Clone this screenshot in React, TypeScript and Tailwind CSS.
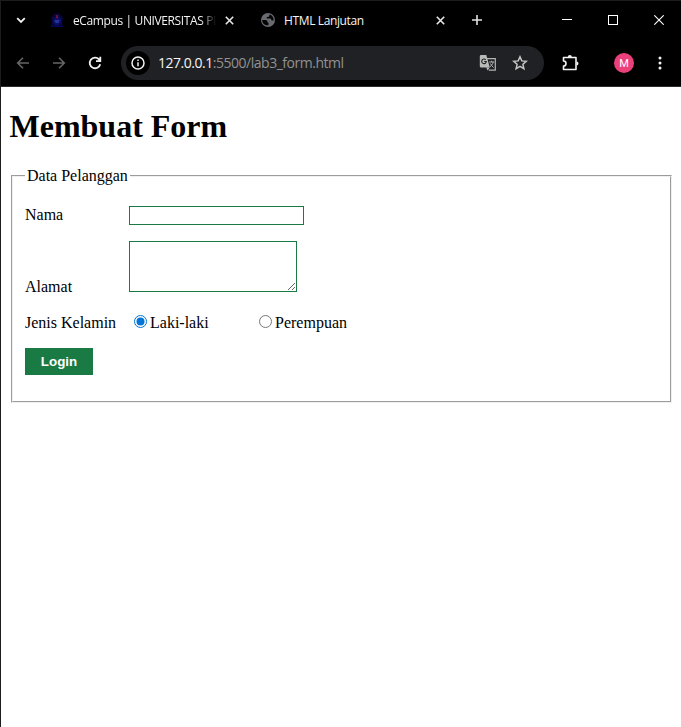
import React from "react";

const ui = "font-['Open_Sans','Noto_Sans',sans-serif]";

function TabClose() {
  return (
    <svg width="9" height="9" viewBox="0 0 9 9" className="shrink-0" stroke="#e8e8e8" strokeWidth="1.6">
      <path d="M.8.8l7.4 7.4M8.2.8L.8 8.2" />
    </svg>
  );
}

function CampusLogo() {
  return (
    <svg width="14" height="16" viewBox="0 0 14 16" className="shrink-0">
      <path d="M4.5 1.5h5l3.5 4-.7 5v3H1.7v-3L1 5.5z" fill="#06063a" />
      <circle cx="7" cy="9" r="4.3" fill="#0d0d66" />
      <path d="M4.5 8h5l-1 3h-3z" fill="#26329a" />
      <path d="M1 13.5h12v1.3H1z" fill="#0a0a70" />
      <path d="M6.4 3h1.3v3.3H6.4z" fill="#b3141c" />
    </svg>
  );
}

function Globe() {
  return (
    <svg width="14" height="14" viewBox="0 0 14 14" className="shrink-0">
      <circle cx="7" cy="7" r="7" fill="#686b6f" />
      <path d="M1.2 7h3.2c1.4 0 2.1.7 2.1 2v.6h1v2.6c-3 .5-6.3-1.5-6.3-5.2z" fill="#050505" />
      <path d="M8.4 1.4v1.2c0 .8-.6 1.4-1.4 1.4H5.8v1.5h3.1c.9 0 1.5.6 1.5 1.5v.6h2.2c.4-2.8-1.4-5.5-4.2-6.2z" fill="#050505" />
    </svg>
  );
}

function TabBar() {
  return (
    <div className="flex h-[38px] items-center">
      <div className="flex w-[49px] justify-center pr-[9px]">
        <svg width="10" height="7" viewBox="0 0 10 7" fill="none" stroke="#f2f2f2" strokeWidth="1.8">
          <path d="M1.2 1.2L5 5l3.8-3.8" />
        </svg>
      </div>
      <div className="flex w-[211px] items-center">
        <CampusLogo />
        <span className="ml-[9px] mt-[2px] w-[152px] whitespace-nowrap text-[12px] leading-4 tracking-[-0.38px] text-[#f2f2f2] [mask-image:linear-gradient(to_right,black_128px,transparent_143px)]">
          eCampus | UNIVERSITAS PE
        </span>
        <TabClose />
      </div>
      <div className="flex w-[186px] items-center">
        <Globe />
        <span className="ml-[9px] mt-[2px] w-[152px] whitespace-nowrap text-[12px] leading-4 tracking-[-0.37px] text-[#f5f5f5]">HTML Lanjutan</span>
        <TabClose />
      </div>
      <svg width="10" height="10" viewBox="0 0 10 10" className="ml-[25px]" stroke="#e2e2e2" strokeWidth="1.6">
        <path d="M5 0v10M0 5h10" />
      </svg>
      <div className="ml-[80px] flex items-center gap-[36px]">
        <svg width="10" height="10" shapeRendering="crispEdges"><path d="M0 4.5h10" stroke="#fff" /></svg>
        <svg width="10" height="10" shapeRendering="crispEdges"><path d="M.5.5h9v9h-9z" stroke="#fff" fill="none" /></svg>
        <svg width="10" height="10"><path d="M.3.3l9.4 9.4M9.7.3L.3 9.7" stroke="#fff" strokeWidth="1.1" /></svg>
      </div>
    </div>
  );
}

function Toolbar() {
  return (
    <div className="flex h-[48px] items-center pb-px pl-[14px]">
      <svg width="16" height="16" viewBox="0 0 16 16" fill="none" stroke="#666666" strokeWidth="1.6">
        <path d="M14 8H3M8 2.7L2.7 8 8 13.3" />
      </svg>
      <svg width="16" height="16" viewBox="0 0 16 16" fill="none" stroke="#666666" strokeWidth="1.6" className="ml-[20px]">
        <path d="M2 8h11M8 2.7L13.3 8 8 13.3" />
      </svg>
      <svg width="16" height="16" viewBox="0 0 16 16" fill="none" stroke="#f2f2f2" strokeWidth="1.8" className="ml-[20px]">
        <path d="M13.2 9.2A5.3 5.3 0 1 1 12 4.4l1.2 1.3M13.3 1.8v4.4H9" />
      </svg>
      <div className="ml-[18px] flex h-[34px] w-[423px] items-center rounded-full bg-[#202124] pl-[5px]">
        <span className="flex size-[24px] items-center justify-center rounded-full bg-black">
          <svg width="14" height="14" viewBox="0 0 14 14" fill="none" stroke="#f2f2f2">
            <circle cx="7" cy="7" r="6" strokeWidth="1.5" />
            <path d="M7 6.2v4M7 3.6v1.5" strokeWidth="1.5" />
          </svg>
        </span>
        <span className="ml-[8px] w-[321px] whitespace-nowrap text-[14px] leading-5 tracking-[-0.48px] text-[#929292]">
          <span className="text-[#f5f5f5]">127.0.0.1</span>:5500/lab3_form.html
        </span>
        <svg width="18" height="18" viewBox="0 0 18 18">
          <path d="M8 4.6h8.3v11.6H9.8" fill="none" stroke="#b4b4b4" strokeWidth="1.2" />
          <path d="M2 1h5.3l3.5 12.5H2a1.2 1.2 0 0 1-1.2-1.2V2.2A1.2 1.2 0 0 1 2 1z" fill="#b9b9b9" />
          <path d="M7.2 13.5h3.6l-2.2 2.9z" fill="#b9b9b9" />
          <path d="M6.7 5.8A2.3 2.3 0 1 0 7.3 7.5H5.2" fill="none" stroke="#202124" strokeWidth="1.1" />
          <path d="M10.2 8h5M12.6 6.8V8M14.2 8c-.4 2-1.5 3.5-3.2 4.7M11.4 9.5c.7 1.7 2 3 3.2 4" fill="none" stroke="#b4b4b4" />
        </svg>
        <svg width="16" height="16" viewBox="0 0 16 16" className="ml-[15px]" fill="none" stroke="#c7c7c7" strokeWidth="1.5">
          <path d="M8 1.8l1.8 4.1 4.5.4-3.4 3 1 4.4L8 11.4l-3.9 2.3 1-4.4-3.4-3 4.5-.4z" />
        </svg>
      </div>
      <svg width="18" height="18" viewBox="0 0 18 18" className="ml-[17px]" fill="none" stroke="#f2f2f2" strokeWidth="1.6">
        <path d="M2.5 3.5H15v12H2.5v-3.4c1.5 0 2.5-1.1 2.5-2.6S4 7 2.5 7z" strokeLinejoin="round" />
        <path d="M6.8 3a2 2 0 0 1 4 0zM15.5 7.5a2 2 0 0 1 0 4z" fill="#f2f2f2" stroke="none" />
      </svg>
      <span className="ml-[35px] flex size-[20px] items-center justify-center rounded-full bg-[#ec407a] pt-px font-['Roboto',sans-serif] text-[11px] leading-none text-white">M</span>
      <svg width="4" height="14" viewBox="0 0 4 14" className="ml-[24px]" fill="#f2f2f2">
        <circle cx="2" cy="2" r="1.5" /><circle cx="2" cy="7" r="1.5" /><circle cx="2" cy="12" r="1.5" />
      </svg>
    </div>
  );
}

function Radio({ checked = false }: { checked?: boolean }) {
  return (
    <svg width="13" height="13" viewBox="0 0 13 13" className="mt-px shrink-0">
      <circle cx="6.5" cy="6.5" r="6" fill="#fff" stroke={checked ? "#0075d8" : "#767676"} />
      {checked && <circle cx="6.5" cy="6.5" r="4" fill="#0075d8" />}
    </svg>
  );
}

export default function App() {
  return (
    <div className="flex h-[727px] w-[681px] flex-col border-l border-t border-[#1c1c1c] bg-white text-black">
      <header className={"h-[86px] shrink-0 border-b border-[#2b2b2b] bg-black " + ui}>
        <TabBar />
        <Toolbar />
      </header>
      <main className="font-['Liberation_Serif',serif] text-[16px] leading-[18px]">
        <h1 className="ml-[8.5px] mt-[21px] h-[37px] text-[32px] font-bold leading-[37px]">Membuat Form</h1>
        <fieldset className="ml-[10px] mt-[22px] h-[236px] w-[661px] border-2 border-[#f0f0f0] px-[12px] [border-style:groove]">
          <legend className="px-[2px]">Data Pelanggan</legend>
          <div className="mt-[21px] flex h-[19px]">
            <label className="w-[104px]">Nama</label>
            <input aria-label="Nama" className="h-[19px] w-[175px] border border-[#1a7a43] bg-white" />
          </div>
          <div className="mt-[16px] flex h-[55px]">
            <label className="w-[104px] self-end">Alamat</label>
            <textarea aria-label="Alamat" className="h-[51px] w-[168px] resize border border-[#1a7a43] bg-white" />
          </div>
          <div className="mt-[18px] flex h-[18px]">
            <span className="w-[109px]">Jenis Kelamin</span>
            <label className="flex w-[125px] gap-[3px]"><Radio checked />Laki-laki</label>
            <label className="flex gap-[3px]"><Radio />Perempuan</label>
          </div>
          <button className="mt-[16px] block h-[27px] w-[68px] bg-[#1a7a43] font-['Liberation_Sans',sans-serif] text-[13.333px] font-bold leading-[15px] text-white">Login</button>
        </fieldset>
      </main>
    </div>
  );
}
